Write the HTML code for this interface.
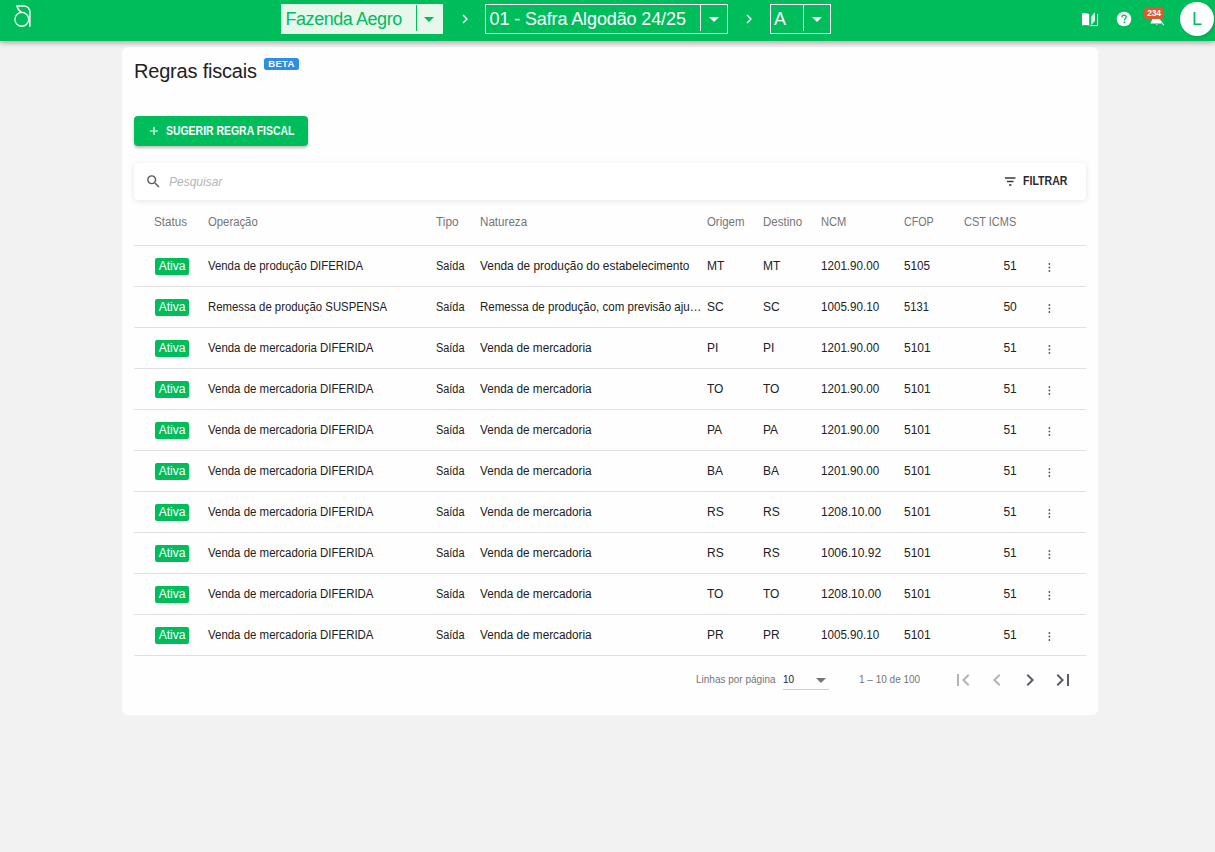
<!DOCTYPE html>
<html><head><meta charset="utf-8">
<style>
*{box-sizing:border-box;margin:0;padding:0}
html,body{width:1215px;height:852px;overflow:hidden;background:#f2f2f2;font-family:"Liberation Sans",sans-serif;color:#212121}
.abs{position:absolute}
#hdr{position:absolute;left:0;top:0;width:1215px;height:41px;background:#00bd5c;box-shadow:0 2px 5px rgba(0,0,0,0.3);z-index:2}
.sel{position:absolute;top:4px;height:30px;border:1px solid #fff}
.sel .t{position:absolute;top:0;line-height:28px;font-size:18px;color:#fff;white-space:nowrap;letter-spacing:-0.3px}
.sel .dv{position:absolute;top:0;height:26px;width:1px;background:#fff}
.sel .ar{position:absolute;top:12px;width:0;height:0;border-left:5.5px solid transparent;border-right:5.5px solid transparent;border-top:5.5px solid #fff}
.chev{position:absolute;top:13px}
#card{position:absolute;left:122px;top:47px;width:976px;height:668px;background:#fefefe;border-radius:6px}
#title{position:absolute;left:134px;top:59px;font-size:20px;line-height:24px;color:#212121;letter-spacing:-0.2px}
#beta{position:absolute;left:264px;top:58px;width:35px;height:11.7px;background:#2e8ee6;border-radius:2.5px;color:#fff;font-size:9.5px;font-weight:bold;line-height:11.5px;text-align:center;letter-spacing:0.3px}
#btn{position:absolute;left:134px;top:116px;width:174px;height:30px;background:#00bd5c;border-radius:4px;box-shadow:0 2px 3px rgba(0,0,0,0.25);color:#fff}
#btn .t{position:absolute;left:32px;top:0;line-height:30px;font-size:12px;font-weight:bold;white-space:nowrap;transform:scaleX(0.87);transform-origin:0 0}
#search{position:absolute;left:134px;top:163px;width:952px;height:37px;background:#fff;border-radius:4px;box-shadow:0 1px 6px rgba(0,0,0,0.1)}
#search .ph{position:absolute;left:35px;top:1px;line-height:37px;font-size:12px;font-style:italic;color:#b5b5b5}
#search .fl{position:absolute;left:889px;top:0;line-height:37px;font-size:12px;font-weight:bold;color:#2a2a2a;transform:scaleX(0.88);transform-origin:0 0}
.th{position:absolute;top:214px;font-size:12px;line-height:16px;color:#757575;white-space:nowrap}
.hl{position:absolute;left:134px;width:952px;height:1px;background:#e0e0e0}
.td{position:absolute;font-size:12px;line-height:16px;color:#212121;white-space:nowrap}
.badge{position:absolute;left:155px;width:34px;height:17px;background:#00bd5c;border-radius:2px;color:#fff;font-size:12px;line-height:17px;text-align:center}
.kb{position:absolute;left:1048px;width:3px}
.kb i{display:block;width:2px;height:2px;border-radius:1px;background:#555;margin:0 0 1.5px 0}
.pg{position:absolute;font-size:10px;line-height:14px;color:#757575;white-space:nowrap}
</style></head>
<body>
<div id="hdr">
  <svg class="abs" style="left:13px;top:4px" width="20" height="26" viewBox="0 0 20 26">
    <circle cx="8.8" cy="15.35" r="6.9" fill="none" stroke="#fff" stroke-width="1.3"/>
    <path d="M16.9 22.8 V8.5 C16.9 4.5 14.5 2 10.5 2 H4 C4.5 4.5 5.8 6.8 8.8 8.3" fill="none" stroke="#fff" stroke-width="1.4"/>
  </svg>
  <div class="sel" style="left:281px;width:162px;background:#e6f7ec;border-color:#e6f7ec">
    <div class="t" style="left:3.5px;color:#00bd5c;letter-spacing:-0.45px">Fazenda Aegro</div>
    <div class="dv" style="left:134px;background:#00bd5c"></div>
    <div class="ar" style="left:142px;border-top-color:#00bd5c"></div>
  </div>
  <svg class="chev" style="left:461px" width="8" height="12" viewBox="0 0 8 12"><path d="M2 2l4 4-4 4" fill="none" stroke="#fff" stroke-width="1.4"/></svg>
  <div class="sel" style="left:485px;width:243px">
    <div class="t" style="left:3.5px;letter-spacing:-0.12px">01 - Safra Algodão 24/25</div>
    <div class="dv" style="left:214px"></div>
    <div class="ar" style="left:223px"></div>
  </div>
  <svg class="chev" style="left:745px" width="8" height="12" viewBox="0 0 8 12"><path d="M2 2l4 4-4 4" fill="none" stroke="#fff" stroke-width="1.4"/></svg>
  <div class="sel" style="left:770px;width:61px">
    <div class="t" style="left:3px">A</div>
    <div class="dv" style="left:32px"></div>
    <div class="ar" style="left:41px"></div>
  </div>
  <!-- book -->
  <svg class="abs" style="left:1081px;top:11px" width="18" height="16" viewBox="0 0 18 16">
    <path d="M1 2.6 C3 2 6 2 8.2 3 V14.6 C6 13.8 3 13.8 1 14.6 Z" fill="#fff"/>
    <path d="M10.2 5.6 L14 1 V9.8 L10.2 14.2 Z" fill="#fff" opacity="0.85"/>
    <path d="M16.6 3 V14.6 H9.2" fill="none" stroke="#fff" stroke-width="1"/>
  </svg>
  <!-- help -->
  <svg class="abs" style="left:1116px;top:11px" width="16" height="16" viewBox="0 0 16 16">
    <circle cx="8" cy="8" r="7.3" fill="#fff"/>
    <path d="M5.9 6.3 C5.9 4.9 6.8 4.1 8 4.1 C9.3 4.1 10.2 4.9 10.2 6 C10.2 7.3 8.5 7.6 8.5 9.4" fill="none" stroke="#00bd5c" stroke-width="1.35"/>
    <rect x="7.75" y="10.6" width="1.5" height="1.5" fill="#00bd5c"/>
  </svg>
  <!-- bell -->
  <svg class="abs" style="left:1148px;top:12px" width="18" height="16" viewBox="0 0 18 16">
    <path d="M5 4 L4.2 7.5 L2.4 11.4 H13.4 L11.6 7.5 L11 4 Z" fill="#fff"/>
    <path d="M11 7 L15.8 13.2" stroke="#fff" stroke-width="1.1"/>
    <path d="M7.8 12.2 H9.8 L8.8 13.4 Z" fill="#fff" opacity="0.8"/>
  </svg>
  <div class="abs" style="left:1144px;top:7px;width:20px;height:11.5px;background:#e0572b;border-radius:4px;color:#fff;font-size:8.5px;font-weight:bold;line-height:13px;letter-spacing:-0.3px;text-align:center">234</div>
  <div class="abs" style="left:1180px;top:2px;width:34px;height:34px;border-radius:17px;background:#fff;box-shadow:1px 1px 3px rgba(0,0,0,0.15);color:#00bd5c;font-size:18px;line-height:34px;text-align:center">L</div>
</div>

<div id="card"></div>
<div id="title">Regras fiscais</div>
<div id="beta">BETA</div>
<div id="btn">
  <svg class="abs" style="left:15.5px;top:11px" width="8" height="8" viewBox="0 0 8 8"><path d="M4 0V8M0 4H8" stroke="#fff" stroke-width="1.2"/></svg>
  <div class="t">SUGERIR REGRA FISCAL</div>
</div>
<div id="search">
  <svg class="abs" style="left:11px;top:10.4px" width="17" height="17" viewBox="0 0 24 24"><path fill="#5a5a5a" d="M15.5 14h-.79l-.28-.27A6.47 6.47 0 0 0 16 9.5 6.5 6.5 0 1 0 9.5 16c1.61 0 3.09-.59 4.23-1.57l.27.28v.79l5 4.99L20.49 19l-4.99-5zm-6 0C7.01 14 5 11.99 5 9.5S7.01 5 9.5 5 14 7.01 14 9.5 11.99 14 9.5 14z"/></svg>
  <div class="ph">Pesquisar</div>
  <svg class="abs" style="left:870px;top:12px" width="12" height="12" viewBox="0 0 12 12"><path d="M1 3H11.5M3 6.5H9.5M5 10H7.5" stroke="#3a3a3a" stroke-width="1.3"/></svg>
  <div class="fl">FILTRAR</div>
</div>
<div id="rows">
<div class="th" style="left:154px;transform:scaleX(0.9700);transform-origin:0 0">Status</div>
<div class="th" style="left:208px;transform:scaleX(0.9429);transform-origin:0 0">Operação</div>
<div class="th" style="left:436px;transform:scaleX(0.9903);transform-origin:0 0">Tipo</div>
<div class="th" style="left:480px;transform:scaleX(0.9670);transform-origin:0 0">Natureza</div>
<div class="th" style="left:707px;transform:scaleX(0.9506);transform-origin:0 0">Origem</div>
<div class="th" style="left:763px;transform:scaleX(0.9607);transform-origin:0 0">Destino</div>
<div class="th" style="left:821px;transform:scaleX(0.9257);transform-origin:0 0">NCM</div>
<div class="th" style="left:904px;transform:scaleX(0.8881);transform-origin:0 0">CFOP</div>
<div class="th" style="left:964px;transform:scaleX(0.9140);transform-origin:0 0">CST ICMS</div>
<div class="hl" style="top:245px"></div>
<div class="badge" style="top:258px">Ativa</div>
<div class="td" style="left:208px;top:258px;transform:scaleX(0.9484);transform-origin:0 0">Venda de produção DIFERIDA</div>
<div class="td" style="left:436px;top:258px;transform:scaleX(0.9089);transform-origin:0 0">Saída</div>
<div class="td" style="left:480px;top:258px;transform:scaleX(0.9900);transform-origin:0 0">Venda de produção do estabelecimento</div>
<div class="td" style="left:707px;top:258px">MT</div>
<div class="td" style="left:763px;top:258px">MT</div>
<div class="td" style="left:821px;top:258px;transform:scaleX(0.9688);transform-origin:0 0">1201.90.00</div>
<div class="td" style="left:904px;top:258px;transform:scaleX(0.9770);transform-origin:0 0">5105</div>
<div class="td" style="left:964px;width:52.8px;text-align:right;top:258px">51</div>
<svg class="abs" style="left:1046px;top:261px" width="7" height="12" viewBox="0 0 7 12"><circle cx="3.4" cy="3" r="0.9" fill="#555"/><circle cx="3.4" cy="6.5" r="0.9" fill="#555"/><circle cx="3.4" cy="10" r="0.9" fill="#555"/></svg>
<div class="hl" style="top:286px"></div>
<div class="badge" style="top:299px">Ativa</div>
<div class="td" style="left:208px;top:299px;transform:scaleX(0.9455);transform-origin:0 0">Remessa de produção SUSPENSA</div>
<div class="td" style="left:436px;top:299px;transform:scaleX(0.9089);transform-origin:0 0">Saída</div>
<div class="td" style="left:480px;top:299px;transform:scaleX(0.9615);transform-origin:0 0">Remessa de produção, com previsão aju…</div>
<div class="td" style="left:707px;top:299px">SC</div>
<div class="td" style="left:763px;top:299px">SC</div>
<div class="td" style="left:821px;top:299px;transform:scaleX(0.9688);transform-origin:0 0">1005.90.10</div>
<div class="td" style="left:904px;top:299px;transform:scaleX(0.9326);transform-origin:0 0">5131</div>
<div class="td" style="left:964px;width:52.8px;text-align:right;top:299px">50</div>
<svg class="abs" style="left:1046px;top:302px" width="7" height="12" viewBox="0 0 7 12"><circle cx="3.4" cy="3" r="0.9" fill="#555"/><circle cx="3.4" cy="6.5" r="0.9" fill="#555"/><circle cx="3.4" cy="10" r="0.9" fill="#555"/></svg>
<div class="hl" style="top:327px"></div>
<div class="badge" style="top:340px">Ativa</div>
<div class="td" style="left:208px;top:340px;transform:scaleX(0.9544);transform-origin:0 0">Venda de mercadoria DIFERIDA</div>
<div class="td" style="left:436px;top:340px;transform:scaleX(0.9089);transform-origin:0 0">Saída</div>
<div class="td" style="left:480px;top:340px;transform:scaleX(0.9781);transform-origin:0 0">Venda de mercadoria</div>
<div class="td" style="left:707px;top:340px">PI</div>
<div class="td" style="left:763px;top:340px">PI</div>
<div class="td" style="left:821px;top:340px;transform:scaleX(0.9688);transform-origin:0 0">1201.90.00</div>
<div class="td" style="left:904px;top:340px">5101</div>
<div class="td" style="left:964px;width:52.8px;text-align:right;top:340px">51</div>
<svg class="abs" style="left:1046px;top:343px" width="7" height="12" viewBox="0 0 7 12"><circle cx="3.4" cy="3" r="0.9" fill="#555"/><circle cx="3.4" cy="6.5" r="0.9" fill="#555"/><circle cx="3.4" cy="10" r="0.9" fill="#555"/></svg>
<div class="hl" style="top:368px"></div>
<div class="badge" style="top:381px">Ativa</div>
<div class="td" style="left:208px;top:381px;transform:scaleX(0.9544);transform-origin:0 0">Venda de mercadoria DIFERIDA</div>
<div class="td" style="left:436px;top:381px;transform:scaleX(0.9089);transform-origin:0 0">Saída</div>
<div class="td" style="left:480px;top:381px;transform:scaleX(0.9781);transform-origin:0 0">Venda de mercadoria</div>
<div class="td" style="left:707px;top:381px">TO</div>
<div class="td" style="left:763px;top:381px">TO</div>
<div class="td" style="left:821px;top:381px;transform:scaleX(0.9688);transform-origin:0 0">1201.90.00</div>
<div class="td" style="left:904px;top:381px">5101</div>
<div class="td" style="left:964px;width:52.8px;text-align:right;top:381px">51</div>
<svg class="abs" style="left:1046px;top:384px" width="7" height="12" viewBox="0 0 7 12"><circle cx="3.4" cy="3" r="0.9" fill="#555"/><circle cx="3.4" cy="6.5" r="0.9" fill="#555"/><circle cx="3.4" cy="10" r="0.9" fill="#555"/></svg>
<div class="hl" style="top:409px"></div>
<div class="badge" style="top:422px">Ativa</div>
<div class="td" style="left:208px;top:422px;transform:scaleX(0.9544);transform-origin:0 0">Venda de mercadoria DIFERIDA</div>
<div class="td" style="left:436px;top:422px;transform:scaleX(0.9089);transform-origin:0 0">Saída</div>
<div class="td" style="left:480px;top:422px;transform:scaleX(0.9781);transform-origin:0 0">Venda de mercadoria</div>
<div class="td" style="left:707px;top:422px">PA</div>
<div class="td" style="left:763px;top:422px">PA</div>
<div class="td" style="left:821px;top:422px;transform:scaleX(0.9688);transform-origin:0 0">1201.90.00</div>
<div class="td" style="left:904px;top:422px">5101</div>
<div class="td" style="left:964px;width:52.8px;text-align:right;top:422px">51</div>
<svg class="abs" style="left:1046px;top:425px" width="7" height="12" viewBox="0 0 7 12"><circle cx="3.4" cy="3" r="0.9" fill="#555"/><circle cx="3.4" cy="6.5" r="0.9" fill="#555"/><circle cx="3.4" cy="10" r="0.9" fill="#555"/></svg>
<div class="hl" style="top:450px"></div>
<div class="badge" style="top:463px">Ativa</div>
<div class="td" style="left:208px;top:463px;transform:scaleX(0.9544);transform-origin:0 0">Venda de mercadoria DIFERIDA</div>
<div class="td" style="left:436px;top:463px;transform:scaleX(0.9089);transform-origin:0 0">Saída</div>
<div class="td" style="left:480px;top:463px;transform:scaleX(0.9781);transform-origin:0 0">Venda de mercadoria</div>
<div class="td" style="left:707px;top:463px">BA</div>
<div class="td" style="left:763px;top:463px">BA</div>
<div class="td" style="left:821px;top:463px;transform:scaleX(0.9688);transform-origin:0 0">1201.90.00</div>
<div class="td" style="left:904px;top:463px">5101</div>
<div class="td" style="left:964px;width:52.8px;text-align:right;top:463px">51</div>
<svg class="abs" style="left:1046px;top:466px" width="7" height="12" viewBox="0 0 7 12"><circle cx="3.4" cy="3" r="0.9" fill="#555"/><circle cx="3.4" cy="6.5" r="0.9" fill="#555"/><circle cx="3.4" cy="10" r="0.9" fill="#555"/></svg>
<div class="hl" style="top:491px"></div>
<div class="badge" style="top:504px">Ativa</div>
<div class="td" style="left:208px;top:504px;transform:scaleX(0.9544);transform-origin:0 0">Venda de mercadoria DIFERIDA</div>
<div class="td" style="left:436px;top:504px;transform:scaleX(0.9089);transform-origin:0 0">Saída</div>
<div class="td" style="left:480px;top:504px;transform:scaleX(0.9781);transform-origin:0 0">Venda de mercadoria</div>
<div class="td" style="left:707px;top:504px">RS</div>
<div class="td" style="left:763px;top:504px">RS</div>
<div class="td" style="left:821px;top:504px">1208.10.00</div>
<div class="td" style="left:904px;top:504px">5101</div>
<div class="td" style="left:964px;width:52.8px;text-align:right;top:504px">51</div>
<svg class="abs" style="left:1046px;top:507px" width="7" height="12" viewBox="0 0 7 12"><circle cx="3.4" cy="3" r="0.9" fill="#555"/><circle cx="3.4" cy="6.5" r="0.9" fill="#555"/><circle cx="3.4" cy="10" r="0.9" fill="#555"/></svg>
<div class="hl" style="top:532px"></div>
<div class="badge" style="top:545px">Ativa</div>
<div class="td" style="left:208px;top:545px;transform:scaleX(0.9544);transform-origin:0 0">Venda de mercadoria DIFERIDA</div>
<div class="td" style="left:436px;top:545px;transform:scaleX(0.9089);transform-origin:0 0">Saída</div>
<div class="td" style="left:480px;top:545px;transform:scaleX(0.9781);transform-origin:0 0">Venda de mercadoria</div>
<div class="td" style="left:707px;top:545px">RS</div>
<div class="td" style="left:763px;top:545px">RS</div>
<div class="td" style="left:821px;top:545px">1006.10.92</div>
<div class="td" style="left:904px;top:545px">5101</div>
<div class="td" style="left:964px;width:52.8px;text-align:right;top:545px">51</div>
<svg class="abs" style="left:1046px;top:548px" width="7" height="12" viewBox="0 0 7 12"><circle cx="3.4" cy="3" r="0.9" fill="#555"/><circle cx="3.4" cy="6.5" r="0.9" fill="#555"/><circle cx="3.4" cy="10" r="0.9" fill="#555"/></svg>
<div class="hl" style="top:573px"></div>
<div class="badge" style="top:586px">Ativa</div>
<div class="td" style="left:208px;top:586px;transform:scaleX(0.9544);transform-origin:0 0">Venda de mercadoria DIFERIDA</div>
<div class="td" style="left:436px;top:586px;transform:scaleX(0.9089);transform-origin:0 0">Saída</div>
<div class="td" style="left:480px;top:586px;transform:scaleX(0.9781);transform-origin:0 0">Venda de mercadoria</div>
<div class="td" style="left:707px;top:586px">TO</div>
<div class="td" style="left:763px;top:586px">TO</div>
<div class="td" style="left:821px;top:586px">1208.10.00</div>
<div class="td" style="left:904px;top:586px">5101</div>
<div class="td" style="left:964px;width:52.8px;text-align:right;top:586px">51</div>
<svg class="abs" style="left:1046px;top:589px" width="7" height="12" viewBox="0 0 7 12"><circle cx="3.4" cy="3" r="0.9" fill="#555"/><circle cx="3.4" cy="6.5" r="0.9" fill="#555"/><circle cx="3.4" cy="10" r="0.9" fill="#555"/></svg>
<div class="hl" style="top:614px"></div>
<div class="badge" style="top:627px">Ativa</div>
<div class="td" style="left:208px;top:627px;transform:scaleX(0.9544);transform-origin:0 0">Venda de mercadoria DIFERIDA</div>
<div class="td" style="left:436px;top:627px;transform:scaleX(0.9089);transform-origin:0 0">Saída</div>
<div class="td" style="left:480px;top:627px;transform:scaleX(0.9781);transform-origin:0 0">Venda de mercadoria</div>
<div class="td" style="left:707px;top:627px">PR</div>
<div class="td" style="left:763px;top:627px">PR</div>
<div class="td" style="left:821px;top:627px;transform:scaleX(0.9688);transform-origin:0 0">1005.90.10</div>
<div class="td" style="left:904px;top:627px">5101</div>
<div class="td" style="left:964px;width:52.8px;text-align:right;top:627px">51</div>
<svg class="abs" style="left:1046px;top:630px" width="7" height="12" viewBox="0 0 7 12"><circle cx="3.4" cy="3" r="0.9" fill="#555"/><circle cx="3.4" cy="6.5" r="0.9" fill="#555"/><circle cx="3.4" cy="10" r="0.9" fill="#555"/></svg>
<div class="hl" style="top:655px"></div>
<div class="pg" style="left:696px;top:673px">Linhas por página</div>
<div class="pg" style="left:783px;top:673px;color:#212121">10</div>
<div class="abs" style="left:816px;top:678px;width:0;height:0;border-left:5px solid transparent;border-right:5px solid transparent;border-top:5px solid #757575"></div>
<div class="abs" style="left:783px;top:689px;width:46px;height:1px;background:#d0d0d0"></div>
<div class="pg" style="left:859px;top:673px">1 – 10 de 100</div>
<svg class="abs" style="left:951px;top:668px" width="24" height="24" viewBox="0 0 24 24"><path fill="#b3b3b3" d="M18.41 16.59L13.82 12l4.59-4.59L17 6l-6 6 6 6zM6 6h2v12H6z"/></svg>
<svg class="abs" style="left:985px;top:668px" width="24" height="24" viewBox="0 0 24 24"><path fill="#b3b3b3" d="M15.41 7.41L14 6l-6 6 6 6 1.41-1.41L10.83 12z"/></svg>
<svg class="abs" style="left:1018px;top:668px" width="24" height="24" viewBox="0 0 24 24"><path fill="#5c5c66" d="M10 6L8.59 7.41 13.17 12l-4.58 4.59L10 18l6-6z"/></svg>
<svg class="abs" style="left:1051px;top:668px" width="24" height="24" viewBox="0 0 24 24"><path fill="#5c5c66" d="M5.59 7.41L10.18 12l-4.59 4.59L7 18l6-6-6-6zM16 6h2v12h-2z"/></svg>
</div>
</body></html>
